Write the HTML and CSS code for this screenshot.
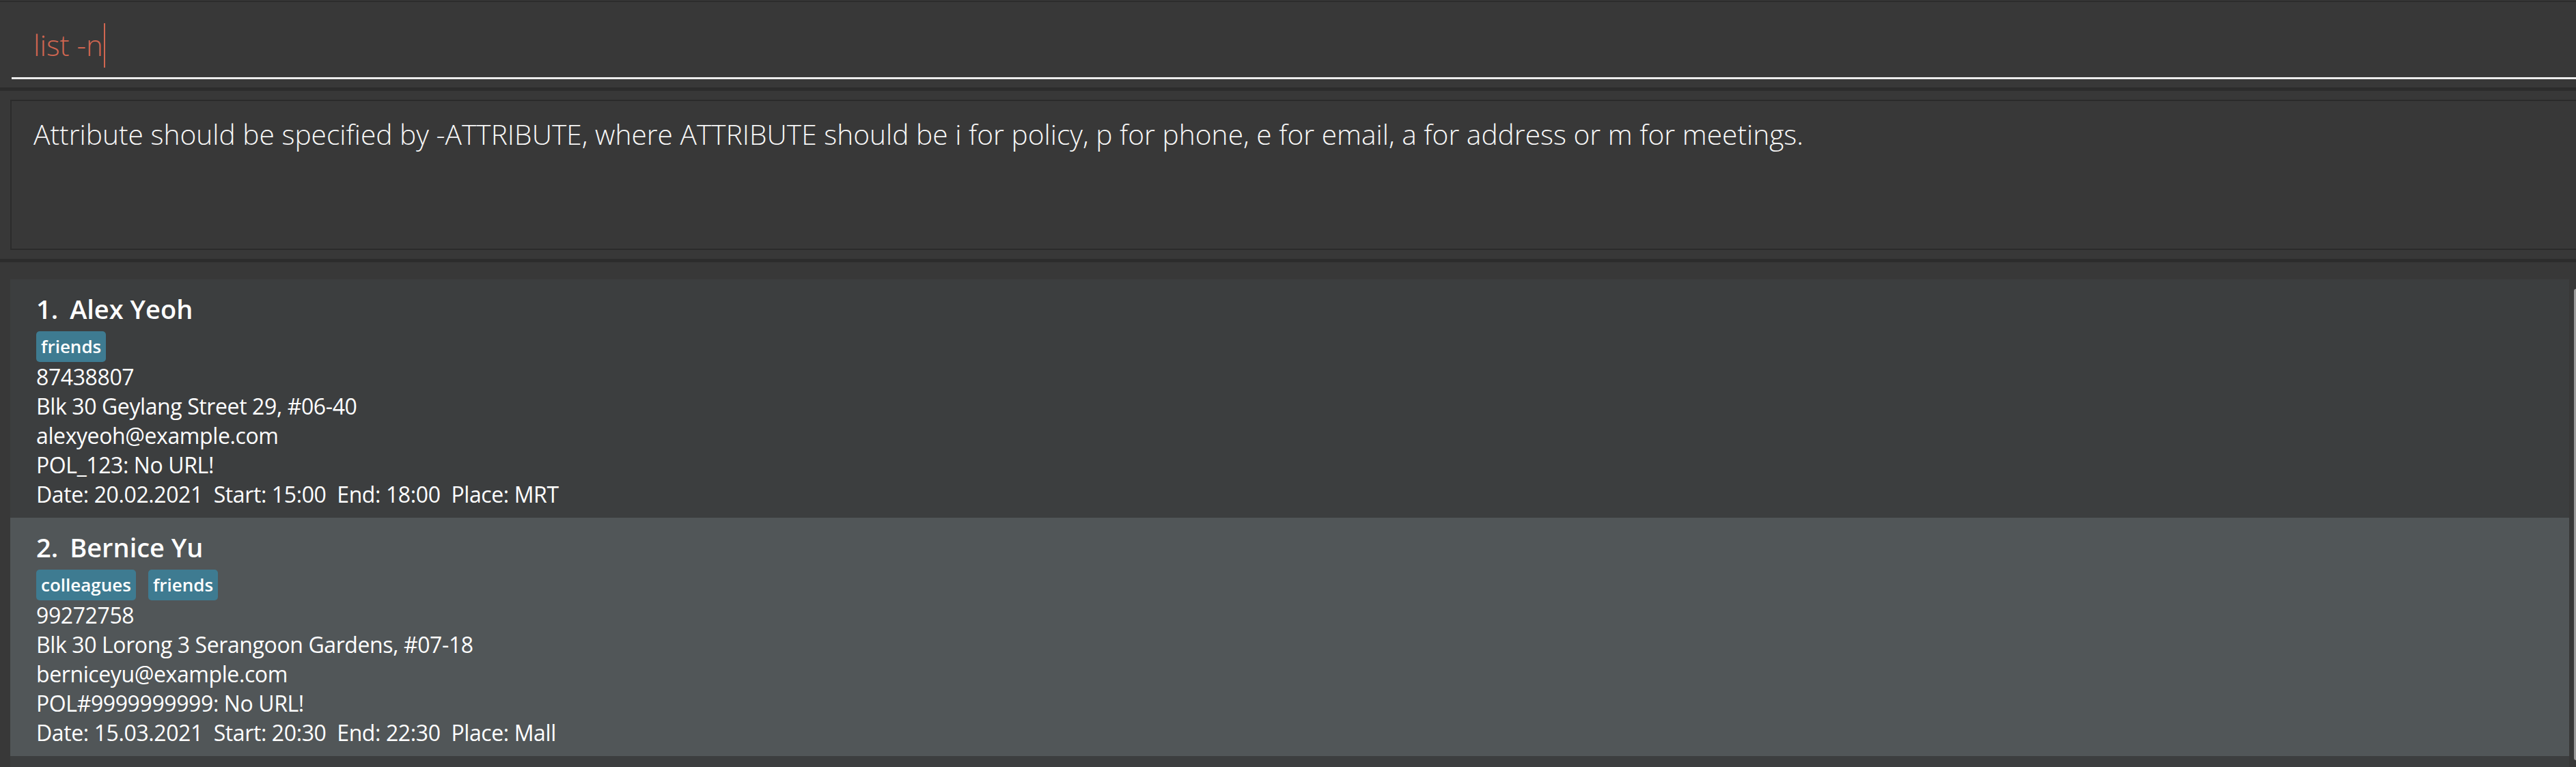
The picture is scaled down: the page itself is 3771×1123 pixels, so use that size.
FILE: index.html
```html
<!DOCTYPE html>
<html lang="en">
<head>
<meta charset="utf-8">
<title>Address Book</title>
<link rel="stylesheet" href="styles.css">
</head>
<body>
<div class="app">
  <div class="topline"></div>
  <div class="command-pane">
    <div class="command-field"><span class="command-text">list -n</span><span class="caret"></span></div>
  </div>
  <div class="separator"></div>
  <div class="result-pane">
    <div class="result-box">
      <p class="result-text">Attribute should be specified by -ATTRIBUTE, where ATTRIBUTE should be i for policy, p for phone, e for email, a for address or m for meetings.</p>
    </div>
  </div>
  <div class="separator thin"></div>
  <div class="list-pane">
    <div class="list">
      <div class="card even">
        <div class="name-row"><span class="idx">1.</span><span class="name">Alex Yeoh</span></div>
        <div class="tags"><span class="tag">friends</span></div>
        <div class="line">87438807</div>
        <div class="line">Blk 30 Geylang Street 29, #06-40</div>
        <div class="line">alexyeoh@example.com</div>
        <div class="line">POL_123: No URL!</div>
        <div class="line">Date: 20.02.2021&nbsp;&nbsp;Start: 15:00&nbsp;&nbsp;End: 18:00&nbsp;&nbsp;Place: MRT</div>
      </div>
      <div class="card odd">
        <div class="name-row"><span class="idx">2.</span><span class="name">Bernice Yu</span></div>
        <div class="tags"><span class="tag">colleagues</span><span class="tag">friends</span></div>
        <div class="line">99272758</div>
        <div class="line">Blk 30 Lorong 3 Serangoon Gardens, #07-18</div>
        <div class="line">berniceyu@example.com</div>
        <div class="line">POL#9999999999: No URL!</div>
        <div class="line">Date: 15.03.2021&nbsp;&nbsp;Start: 20:30&nbsp;&nbsp;End: 22:30&nbsp;&nbsp;Place: Mall</div>
      </div>
    </div>
    <div class="scroll"><div class="thumb"></div></div>
  </div>
</div>
</body>
</html>
```

FILE: styles.css
```css
html, body {
  margin: 0;
  padding: 0;
}
body {
  background: #383838;
  font-family: "Open Sans", "Noto Sans", sans-serif;
  color: #ffffff;
  overflow: hidden;
}
.app {
  display: flex;
  flex-direction: column;
  height: 1123px;
  overflow: hidden;
}
.topline {
  height: 2px;
  margin-top: 1px;
  background: #2c2c2c;
  flex: none;
}
.command-pane {
  height: 125px;
  flex: none;
  padding-left: 17px;
  box-sizing: border-box;
}
.command-field {
  height: 113px;
  box-sizing: border-box;
  border-bottom: 3px solid #ececec;
  padding: 31px 0 0 32px;
  white-space: nowrap;
}
.command-text {
  font-size: 42px;
  font-weight: 300;
  line-height: 60px;
  color: #d06651;
}
.caret {
  display: inline-block;
  width: 2px;
  height: 65px;
  margin-left: 1px;
  background: #d06651;
  vertical-align: -17px;
}
.separator {
  height: 5px;
  background: #2c2c2c;
  flex: none;
}
.separator.thin {
  height: 5px;
}
.result-pane {
  flex: none;
  padding: 13px 0 13px 15px;
}
.result-box {
  height: 220px;
  box-sizing: border-box;
  border: 2px solid #2b2b2b;
  border-right: none;
  padding: 20px 0 0 32px;
}
.result-text {
  margin: 0;
  font-size: 40.7px;
  font-weight: 300;
  line-height: 56px;
  color: #f7f7f7;
  white-space: nowrap;
}
.list-pane {
  flex: 1;
  display: flex;
  padding: 25px 0 0 15px;
  min-height: 0;
}
.list {
  flex: 1;
  background: #3c3e3f;
}
.scroll {
  width: 10px;
  flex: none;
  padding-top: 14px;
  box-sizing: border-box;
}
.thumb {
  margin-left: 7px;
  width: 3px;
  height: 690px;
  background: #9c9c9c;
  border-radius: 3px 0 0 3px;
}
.card {
  height: 349px;
  box-sizing: border-box;
  padding: 19px 0 0 38px;
}
.card.even {
  background: #3c3e3f;
}
.card.odd {
  background: #515658;
}
.name-row {
  font-size: 38px;
  font-weight: 600;
  line-height: 48px;
  white-space: nowrap;
}
.idx {
  margin-right: 17px;
}
.tags {
  display: flex;
  gap: 18px;
  margin-top: 9px;
  height: 45px;
}
.tag {
  background: #3e7b91;
  color: #ffffff;
  font-size: 26px;
  font-weight: 600;
  line-height: 45px;
  padding: 0 7px;
  border-radius: 5px;
}
.line {
  font-size: 32px;
  letter-spacing: -0.4px;
  line-height: 43px;
  white-space: nowrap;
}
```
